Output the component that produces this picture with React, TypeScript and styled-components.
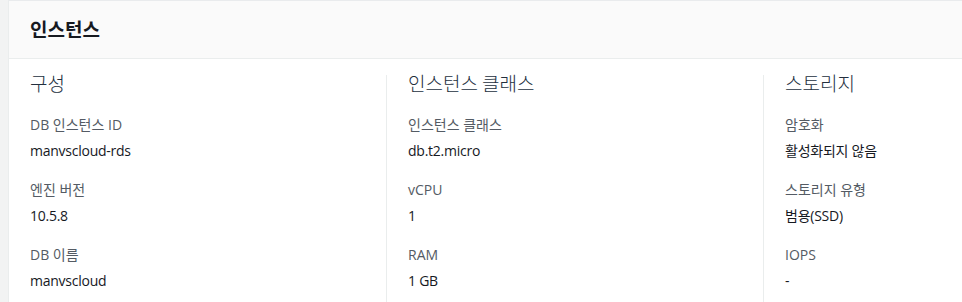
import React from "react";
import styled, { createGlobalStyle } from "styled-components";

const Global = createGlobalStyle`
  html, body { margin: 0; padding: 0; background: #f2f3f3; overflow: hidden; }
  body { font-family: "Open Sans", "Noto Sans CJK KR", sans-serif; }
`;

const Page = styled.div`
  padding: 0 0 0 8px;
  height: 302px;
  box-sizing: border-box;
`;

const Card = styled.section`
  width: 1140px;
  background: #ffffff;
  border-top: 1px solid #e9ebed;
  border-left: 1px solid #eaeded;
  height: 302px;
  box-sizing: border-box;
`;

const Header = styled.header`
  height: 58px;
  box-sizing: border-box;
  background: #fafafa;
  border-bottom: 1px solid #eaeded;
  display: flex;
  align-items: center;
  padding: 0 21px 3px;
`;

const Title = styled.h2`
  margin: 0;
  font-size: 19px;
  font-weight: 700;
  color: #16191f;
  font-family: "Noto Sans CJK KR", sans-serif;
`;

const Columns = styled.div`
  display: grid;
  grid-template-columns: repeat(3, 377px);
  padding-top: 13px;
`;

const Column = styled.div<{ $first?: boolean }>`
  border-left: ${(p) => (p.$first ? "none" : "1px solid #eaeded")};
  margin-top: ${(p) => (p.$first ? "0" : "3px")};
  padding: 0 20px 0 21px;
  height: 240px;
`;

const Heading = styled.h3<{ $first?: boolean }>`
  margin: ${(p) => (p.$first ? "0" : "-3px")} 0 0;
  font-size: 19px;
  font-weight: 300;
  color: #232f3e;
  line-height: 22px;
  height: 22px;
  font-family: "Noto Sans CJK KR", sans-serif;
`;

const Fields = styled.dl`
  margin: 21px 0 0;
  display: flex;
  flex-direction: column;
  gap: 20px;
`;

const Field = styled.div`
  display: flex;
  flex-direction: column;
  gap: 6px;
`;

const Label = styled.dt`
  font-size: 14px;
  line-height: 20px;
  color: #545b64;
`;

const Value = styled.dd`
  margin: 0;
  font-size: 14px;
  line-height: 19px;
  color: #16191f;
  letter-spacing: -0.25px;
`;

type F = [string, string];
const cols: { title: string; fields: F[] }[] = [
  {
    title: "구성",
    fields: [
      ["DB 인스턴스 ID", "manvscloud-rds"],
      ["엔진 버전", "10.5.8"],
      ["DB 이름", "manvscloud"],
    ],
  },
  {
    title: "인스턴스 클래스",
    fields: [
      ["인스턴스 클래스", "db.t2.micro"],
      ["vCPU", "1"],
      ["RAM", "1 GB"],
    ],
  },
  {
    title: "스토리지",
    fields: [
      ["암호화", "활성화되지 않음"],
      ["스토리지 유형", "범용(SSD)"],
      ["IOPS", "-"],
    ],
  },
];

export default function App() {
  return (
    <>
      <Global />
      <Page>
        <Card>
          <Header>
            <Title>인스턴스</Title>
          </Header>
          <Columns>
            {cols.map((c, i) => (
              <Column key={c.title} $first={i === 0}>
                <Heading $first={i === 0}>{c.title}</Heading>
                <Fields>
                  {c.fields.map(([l, v]) => (
                    <Field key={l}>
                      <Label>{l}</Label>
                      <Value>{v}</Value>
                    </Field>
                  ))}
                </Fields>
              </Column>
            ))}
          </Columns>
        </Card>
      </Page>
    </>
  );
}
